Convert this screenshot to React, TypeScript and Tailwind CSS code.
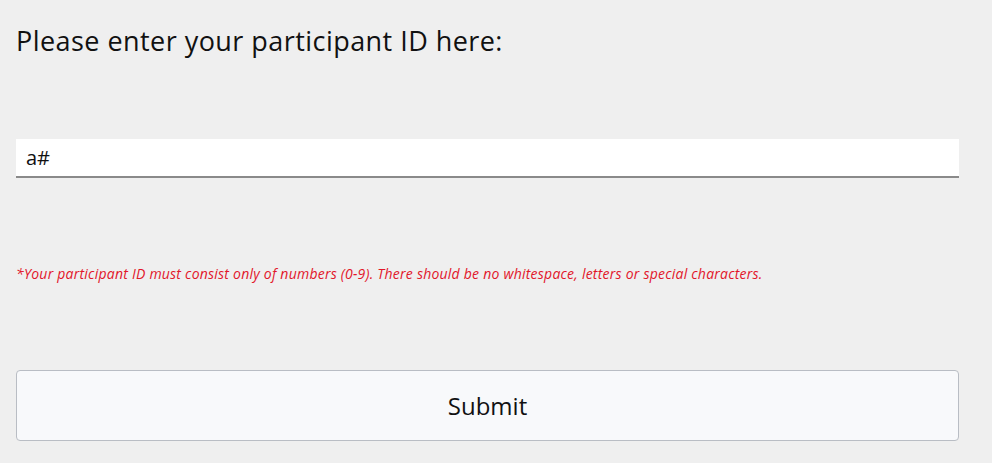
import React from "react";

export default function App() {
  return (
    <div className="min-h-[463px] w-full bg-[#efefef] px-4 pt-[22px]" style={{ fontFamily: '"Open Sans", "Noto Sans", sans-serif' }}>
      <h1 className="m-0 h-[37px] text-[27px] font-normal leading-[37px] tracking-[0.45px] text-[#111]">Please enter your participant ID here:</h1>
      <div className="mt-[80px] flex h-[39px] w-[943px] items-center border-b-2 border-[#8a8a8a] bg-white pl-[10px] text-[20px] text-[#111]">
        a#
      </div>
      <p className="mt-[86px] h-[20px] text-[14px] italic leading-[20px] tracking-[0.23px] text-[#e2162a]">
        *Your participant ID must consist only of numbers (0-9). There should be no whitespace, letters or special characters.
      </p>
      <button className="mt-[86px] flex h-[71px] w-[943px] items-center justify-center rounded-[4px] border border-[#b9bdc4] bg-[#f8f9fb] text-[24px] text-[#111]">
        Submit
      </button>
    </div>
  );
}
